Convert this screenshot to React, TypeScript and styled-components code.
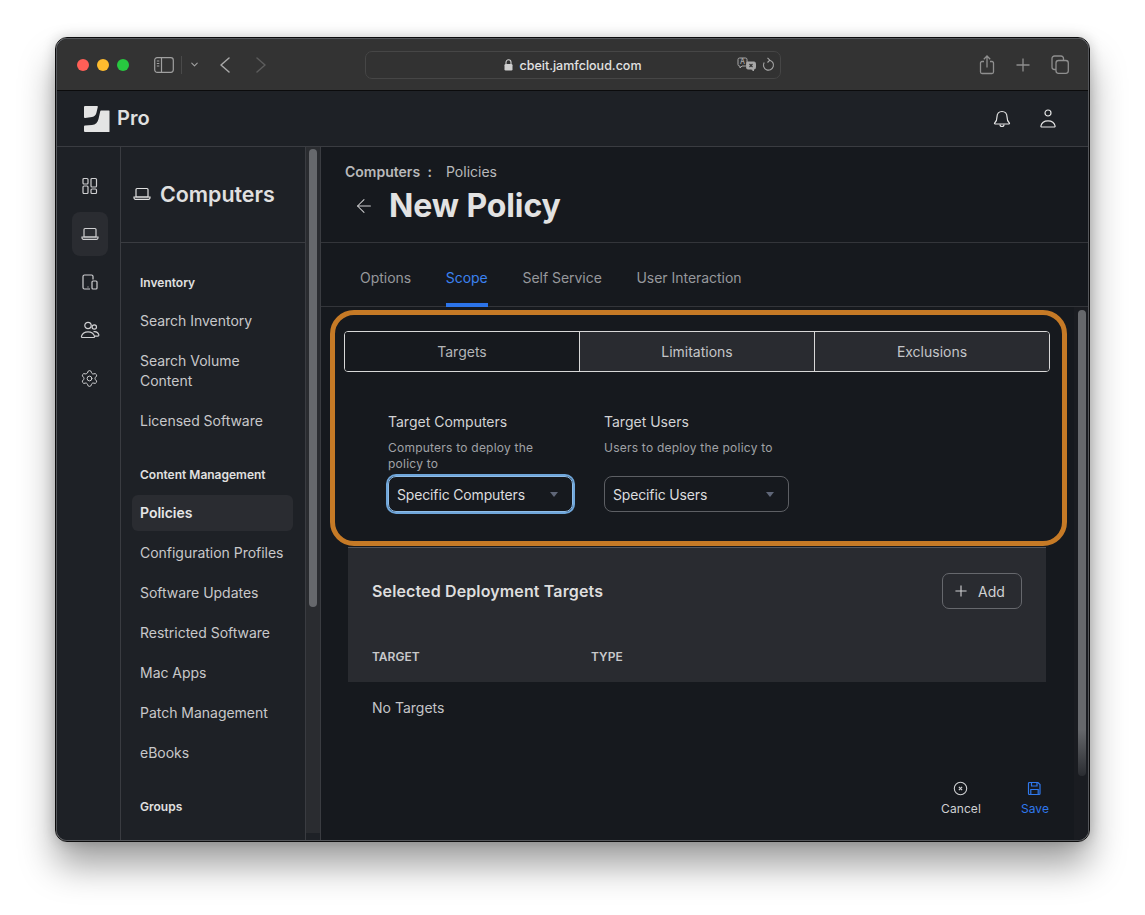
import React from 'react'
import styled, { createGlobalStyle } from 'styled-components'
import { ArrowLeft, ChevronDown, Settings } from 'lucide-react'

const GlobalStyle = createGlobalStyle`
  html, body {
    margin: 0;
    padding: 0;
    background: #fff;
  }
  body {
    font-family: Inter, "Liberation Sans", sans-serif;
    -webkit-font-smoothing: antialiased;
  }
  * {
    box-sizing: border-box;
  }
`

const Page = styled.div`
  width: 1145px;
  height: 915px;
  padding: 38px 0 0 56px;
  overflow: hidden;
`

const Window = styled.div`
  width: 1033px;
  height: 803px;
  display: flex;
  flex-direction: column;
  border-radius: 11px;
  overflow: hidden;
  border: 1px solid #55575b;
  outline: 1px solid #0c0c0d;
  background: #1e2126;
  box-shadow: 0 24px 36px rgba(0, 0, 0, 0.38), 0 0 14px rgba(0, 0, 0, 0.22);
`

const TitleBar = styled.div`
  height: 52px;
  flex: none;
  display: flex;
  align-items: center;
  background: #333333;
  border-bottom: 1px solid #0b0b0c;
  padding-left: 20px;
  color: #a0a0a0;
  position: relative;
`

const Light = styled.span<{ $color: string }>`
  width: 12px;
  height: 12px;
  border-radius: 50%;
  margin-right: 8px;
  background: ${(p) => p.$color};
`

const SidebarToggle = styled.div`
  margin-left: 17px;
  display: flex;
  align-items: center;
  gap: 7px;
`

const Divider = styled.span`
  width: 1px;
  height: 18px;
  background: #4a4a4a;
`

const NavArrows = styled.div`
  display: flex;
  align-items: center;
  margin-left: 20px;
  gap: 26px;
`

const AddressBar = styled.div`
  position: absolute;
  left: 308px;
  top: 12px;
  width: 416px;
  height: 28px;
  border-radius: 7px;
  border: 1px solid #464646;
  background: #323232;
  display: flex;
  align-items: center;
  justify-content: center;
  gap: 6px;
  font-size: 12.5px;
  font-weight: 500;
  color: #e2e2e2;
`

const AddressRight = styled.div`
  position: absolute;
  right: 5px;
  top: 5px;
  display: flex;
  align-items: center;
  gap: 6px;
  color: #a8a8a8;
`

const WindowActions = styled.div`
  margin-left: auto;
  margin-right: 19px;
  display: flex;
  align-items: center;
  gap: 21px;
  color: #8f8f8f;
`

const AppHeader = styled.header`
  height: 56px;
  flex: none;
  display: flex;
  align-items: center;
  padding: 0 30px 0 27px;
  background: #1e2126;
  border-bottom: 1px solid #3a3c41;
  color: #e4e4e4;
`

const Brand = styled.div`
  display: flex;
  align-items: center;
  gap: 7px;
  font-size: 20px;
  font-weight: 600;
  color: #e0e0e0;
`

const BrandName = styled.span`
  padding-bottom: 2px;
`

const HeaderActions = styled.div`
  margin-left: auto;
  display: flex;
  align-items: center;
  gap: 26px;
`

const Body = styled.div`
  flex: 1;
  min-height: 0;
  display: flex;
`

const Rail = styled.nav`
  width: 64px;
  flex: none;
  display: flex;
  flex-direction: column;
  align-items: center;
  padding: 17px 0 0 2px;
  gap: 4px;
  background: #1e2126;
  border-right: 1px solid #3a3c41;
  color: #cfcfd1;
`

const RailItem = styled.div<{ $active?: boolean }>`
  width: 36px;
  height: 44px;
  border-radius: 8px;
  display: flex;
  align-items: center;
  justify-content: center;
  background: ${(p) => (p.$active ? '#2a2c31' : 'transparent')};
`

const SubNav = styled.aside`
  width: 200px;
  flex: none;
  display: flex;
  background: #1e2126;
  border-right: 1px solid #3a3c41;
  overflow: hidden;
`

const SubNavColumn = styled.div`
  width: 185px;
  flex: none;
  border-right: 1px solid #3a3c41;
`

const SubNavHeader = styled.div`
  height: 96px;
  display: flex;
  align-items: center;
  gap: 9px;
  padding: 0 0 2px 12px;
  border-bottom: 1px solid #3a3c41;
  font-size: 21.4px;
  font-weight: 600;
  color: #e0e0e0;
`

const NavList = styled.div`
  padding: 30px 12px 0 11px;
`

const NavGroup = styled.div`
  font-size: 12px;
  font-weight: 600;
  line-height: 20px;
  color: #e0e0e0;
  padding-left: 8px;
  margin-bottom: 10px;
`

const NavItem = styled.div<{ $active?: boolean; $last?: boolean }>`
  padding: 8px;
  margin-bottom: ${(p) => (p.$last ? '26px' : '4px')};
  border-radius: 6px;
  font-size: 14px;
  line-height: 20px;
  letter-spacing: -0.02px;
  font-weight: ${(p) => (p.$active ? 600 : 400)};
  color: ${(p) => (p.$active ? '#e6e6e6' : '#c8c8ca')};
  background: ${(p) => (p.$active ? '#2a2c31' : 'transparent')};
`

const ScrollTrack = styled.div`
  flex: 1;
  padding: 2px 3px 0 3px;
  margin-bottom: 7px;
  background: #2a2c30;
`

const ScrollThumb = styled.div`
  height: 458px;
  border-radius: 5px;
  background: #66686c;
`

const Main = styled.main`
  flex: 1;
  min-width: 0;
  display: flex;
  flex-direction: column;
  background: #16191e;
  position: relative;
`

const PageHeader = styled.div`
  height: 96px;
  flex: none;
  padding: 16px 0 0 24px;
  border-bottom: 1px solid #33353a;
`

const Breadcrumb = styled.div`
  display: flex;
  font-size: 14px;
  line-height: 18px;
  color: #b9b9bb;
`

const Crumb = styled.span`
  width: 101px;
  font-weight: 600;
  word-spacing: 4px;
`

const TitleRow = styled.div`
  display: flex;
  align-items: center;
  margin-top: 4px;
  padding-left: 8px;
  gap: 14px;
  color: #cfcfd1;
`

const Title = styled.h1`
  margin: 0;
  font-size: 32px;
  line-height: 42px;
  font-weight: 700;
  letter-spacing: -0.1px;
  color: #e2e2e2;
`

const Tabs = styled.div`
  height: 64px;
  flex: none;
  display: flex;
  gap: 34.7px;
  padding-left: 39px;
  border-bottom: 1px solid #33353a;
`

const Tab = styled.div<{ $active?: boolean }>`
  display: flex;
  align-items: center;
  height: 64px;
  padding-top: 8px;
  font-size: 14px;
  letter-spacing: -0.03px;
  color: ${(p) => (p.$active ? '#3b82f0' : '#96989c')};
  border-bottom: 4px solid ${(p) => (p.$active ? '#2c74ea' : 'transparent')};
`

const Content = styled.div`
  flex: 1;
  min-height: 0;
  padding: 24px 38px 0 23px;
`

const Segments = styled.div`
  display: grid;
  grid-template-columns: 234px 235px 1fr;
  height: 41px;
  border: 1px solid #d8d8d8;
  border-radius: 4px;
  overflow: hidden;
`

const Segment = styled.div<{ $active?: boolean; $first?: boolean }>`
  display: flex;
  align-items: center;
  justify-content: center;
  font-size: 14px;
  color: ${(p) => (p.$active ? '#b4b5b8' : '#c4c5c8')};
  background: ${(p) => (p.$active ? '#16191e' : '#292b30')};
  border-left: ${(p) => (p.$first ? 'none' : '1px solid #d8d8d8')};
`

const Fields = styled.div`
  display: flex;
  gap: 31px;
  padding: 40px 0 0 44px;
`

const Field = styled.div`
  width: 185px;
`

const FieldLabel = styled.div`
  font-size: 14px;
  line-height: 20px;
  color: #d2d3d5;
`

const FieldHint = styled.div`
  margin-top: 8px;
  height: 32px;
  padding-right: 9px;
  font-size: 12px;
  line-height: 16px;
  color: #a0a2a6;
  letter-spacing: 0.23px;
`

const Select = styled.div<{ $focused?: boolean }>`
  margin-top: 4px;
  height: 36px;
  display: flex;
  align-items: center;
  justify-content: space-between;
  padding: 0 14px 0 8px;
  border-radius: 8px;
  font-size: 14px;
  letter-spacing: -0.15px;
  color: #dcdcde;
  border: 1px solid ${(p) => (p.$focused ? '#8ebce8' : '#5d5f64')};
  box-shadow: ${(p) => (p.$focused ? '0 0 0 2px #6fa6da' : 'none')};
`

const Caret = styled.span`
  width: 0;
  height: 0;
  border-left: 4px solid transparent;
  border-right: 4px solid transparent;
  border-top: 5px solid #5f6678;
`

const TargetsPanel = styled.section`
  margin: 35px 4px 0;
  height: 135px;
  padding: 25px 24px 0;
  background: #292b30;
  border-top: 1px solid #55575c;
`

const PanelHeader = styled.div`
  display: flex;
  align-items: center;
  justify-content: space-between;
  height: 36px;
`

const PanelTitle = styled.h2`
  margin: 0;
  font-size: 16px;
  font-weight: 600;
  letter-spacing: 0.13px;
  color: #dedede;
`

const AddButton = styled.div`
  width: 80px;
  height: 36px;
  display: flex;
  align-items: center;
  gap: 11px;
  padding-left: 12px;
  border: 1px solid #66686d;
  border-radius: 7px;
  font-size: 14px;
  color: #d0d1d3;
`

const TableHead = styled.div`
  display: grid;
  grid-template-columns: 219px 1fr;
  margin-top: 40px;
  font-size: 12px;
  line-height: 16px;
  font-weight: 600;
  color: #c8c9cb;
`

const EmptyRow = styled.div`
  padding: 16px 28px;
  font-size: 14px;
  line-height: 20px;
  color: #c4c5c8;
`

const Footer = styled.div`
  height: 62px;
  flex: none;
  display: flex;
  justify-content: flex-end;
  gap: 40px;
  padding: 3px 39px 0 0;
`

const FooterAction = styled.div<{ $primary?: boolean }>`
  display: flex;
  flex-direction: column;
  align-items: center;
  gap: 5px;
  font-size: 12px;
  line-height: 16px;
  letter-spacing: 0.08px;
  color: ${(p) => (p.$primary ? '#2f78ec' : '#cfd0d2')};
`

const Highlight = styled.div`
  position: absolute;
  left: 9px;
  top: 163px;
  width: 737px;
  height: 236px;
  border: 5px solid #c67a26;
  border-radius: 24px;
  pointer-events: none;
`

const MainScrollbar = styled.div`
  position: absolute;
  right: 0;
  top: 160px;
  bottom: 0;
  width: 14px;
  padding: 3px 2px 0 4px;
  background: #1a1c21;
`

const MainScrollThumb = styled.div`
  height: 466px;
  border-radius: 5px;
  background: linear-gradient(#66686c 90%, #2a2c31);
`

function JamfLogo() {
  return (
    <svg width="26" height="26" viewBox="0 0 26 26" fill="#e4e4e4">
      <path d="M1 0h12a.8.8 0 0 1 .8 1L12.500 6.500C12 9 10.500 10.500 8 11L1.200 12A1 1 0 0 1 0 11V1a1 1 0 0 1 1-1z" />
      <path d="M17.500 4.500H25a.5.5 0 0 1 .5.5v20.500a.5.5 0 0 1-.5.5H1a1 1 0 0 1-1-1V20.500a1 1 0 0 1 1-1l7-.5c3.500-.3 5.800-2.500 6.500-6l1.700-7.500c.1-.6.500-1 1.300-1z" />
    </svg>
  )
}

function DashboardIcon() {
  return (
    <svg width="18" height="18" viewBox="0 0 18 18" fill="none" stroke="currentColor" strokeWidth="1.2">
      <rect x="2" y="1.500" width="5" height="5.500" rx="1" />
      <rect x="2" y="9" width="5" height="7.500" rx="1" />
      <rect x="10" y="1.500" width="5.500" height="8.500" rx="1" />
      <rect x="10" y="12" width="5.500" height="4.500" rx="1" />
    </svg>
  )
}

function LaptopIcon({ size = 18 }: { size?: number }) {
  return (
    <svg width={size} height={size} viewBox="0 0 18 18" fill="none" stroke="currentColor" strokeWidth="1.200">
      <path d="M4 3.500h10a1 1 0 0 1 1 1V12H3V4.500a1 1 0 0 1 1-1z" />
      <path d="M1 12h16v.8a1.500 1.500 0 0 1-1.500 1.500h-13A1.500 1.500 0 0 1 1 12.800z" />
    </svg>
  )
}

function DevicesIcon() {
  return (
    <svg width="18" height="18" viewBox="0 0 18 18" fill="none" stroke="currentColor" strokeWidth="1.200">
      <path d="M9 16H3.500A1.500 1.500 0 0 1 2 14.500V3.500A1.500 1.500 0 0 1 3.500 2h7A1.500 1.500 0 0 1 12 3.500V6.500" />
      <rect x="11" y="8" width="5" height="8" rx="1" />
      <path d="M6.500 14h1" />
    </svg>
  )
}

function UsersIcon() {
  return (
    <svg width="20" height="18" viewBox="0 0 20 18" fill="none" stroke="currentColor" strokeWidth="1.200">
      <circle cx="8" cy="4.500" r="3.200" />
      <circle cx="14.300" cy="6" r="2.200" />
      <path d="M2.500 16.500h11c.8 0 1.200-.6 1-1.300C13.700 12.500 11.200 10.800 8 10.800s-5.700 1.700-6.500 4.400c-.2.700.2 1.300 1 1.300z" />
      <path d="M13.500 10.700c2.500-.5 4.600.7 5.300 3 .2.800-.2 1.500-1 1.500h-2.800" />
    </svg>
  )
}

function SidebarIcon() {
  return (
    <svg width="20" height="16" viewBox="0 0 20 16" fill="none" stroke="currentColor" strokeWidth="1.200">
      <rect x="0.700" y="0.700" width="18.600" height="14.600" rx="2.500" />
      <path d="M7.500 1v14" />
      <path d="M2.800 4h2.500M2.800 6.500h2.500M2.800 9h2.500" />
    </svg>
  )
}

function Chevron({ flip, color }: { flip?: boolean; color: string }) {
  return (
    <svg width="10" height="16" viewBox="0 0 10 16" fill="none" stroke={color} strokeWidth="1.500" strokeLinecap="round" strokeLinejoin="round">
      <path d={flip ? 'M1 1l8 7-8 7' : 'M9 1L1 8l8 7'} />
    </svg>
  )
}

function LockIcon() {
  return (
    <svg width="9" height="12" viewBox="0 0 9 12" fill="#cfcfcf">
      <path d="M2 5V3.300a2.500 2.500 0 0 1 5 0V5" fill="none" stroke="#cfcfcf" strokeWidth="1.100" />
      <rect x="0.500" y="5" width="8" height="6.500" rx="1.200" />
    </svg>
  )
}

function TranslateIcon() {
  return (
    <svg width="19" height="15" viewBox="0 0 19 15" fill="none" stroke="currentColor" strokeWidth="1">
      <path d="M2.500 1h6A1.500 1.500 0 0 1 10 2.500v5A1.500 1.500 0 0 1 8.500 9H5L3 11V9h-.5A1.500 1.500 0 0 1 1 7.500v-5A1.500 1.500 0 0 1 2.500 1z" />
      <text x="3" y="7.400" fontSize="7" fill="currentColor" stroke="none" fontFamily="Inter, sans-serif">
        A
      </text>
      <path d="M10 5h7A1.500 1.500 0 0 1 18.500 6.500v4A1.500 1.500 0 0 1 17 12H16.500v2l-2-2H11A1.500 1.500 0 0 1 9.500 10.500V9.500z" fill="currentColor" />
      <path d="M12.500 7l3 3M15.500 7l-3 3" stroke="#323232" strokeWidth="1.100" />
    </svg>
  )
}

function ReloadIcon() {
  return (
    <svg width="13" height="15" viewBox="0 0 13 15" fill="none" stroke="currentColor" strokeWidth="1.100">
      <path d="M7.500 3.200a5 5 0 1 1-5.300 2.300" />
      <path d="M5.500 0.800l2.300 2.400-2.300 2.300" />
    </svg>
  )
}

function ShareIcon() {
  return (
    <svg width="16" height="20" viewBox="0 0 16 20" fill="none" stroke="currentColor" strokeWidth="1.300">
      <path d="M5 6.500H3A1.500 1.500 0 0 0 1.500 8v9A1.500 1.500 0 0 0 3 18.500h10a1.500 1.500 0 0 0 1.500-1.500V8A1.500 1.500 0 0 0 13 6.500h-2" />
      <path d="M8 12.500V1M4.800 4.200L8 1l3.200 3.200" />
    </svg>
  )
}

function PlusIcon({ size = 14 }: { size?: number }) {
  return (
    <svg width={size} height={size} viewBox="0 0 14 14" fill="none" stroke="currentColor" strokeWidth="1.300">
      <path d="M7 0.500v13M0.500 7h13" />
    </svg>
  )
}

function TabsIcon() {
  return (
    <svg width="18" height="19" viewBox="0 0 18 19" fill="none" stroke="currentColor" strokeWidth="1.300">
      <rect x="5" y="5.500" width="12.300" height="12.800" rx="2.500" />
      <path d="M5 14.500H3.500A2.500 2.500 0 0 1 1 12V3.500A2.500 2.500 0 0 1 3.500 1H10a2.500 2.500 0 0 1 2.500 2.500V5.500" />
    </svg>
  )
}

function BellIcon() {
  return (
    <svg width="20" height="20" viewBox="0 0 20 20" fill="none" stroke="currentColor" strokeWidth="1.200">
      <path d="M10 2.500c-3 0-5 2.300-5 5.300 0 3.200-.8 4.800-2.300 6.200-.4.400-.2 1 .4 1h13.800c.6 0 .8-.6.4-1-1.500-1.400-2.300-3-2.300-6.200 0-3-2-5.300-5-5.300z" />
      <path d="M8 15.500a2 2 0 0 0 4 0" />
    </svg>
  )
}

function UserIcon() {
  return (
    <svg width="20" height="20" viewBox="0 0 20 20" fill="none" stroke="currentColor" strokeWidth="1.200">
      <circle cx="10" cy="4" r="3" />
      <path d="M3.700 18h12.600c.6 0 .9-.5.8-1-.6-3-3.500-5.200-7.100-5.200S3.500 14 2.900 17c-.1.500.2 1 .8 1z" />
    </svg>
  )
}

function CancelIcon() {
  return (
    <svg width="15" height="15" viewBox="0 0 15 15" fill="none" stroke="currentColor" strokeWidth="1.100">
      <circle cx="7.500" cy="7.500" r="6.200" />
      <path d="M5.900 5.900l3.200 3.200M9.100 5.900l-3.200 3.200" strokeWidth="1.200" />
    </svg>
  )
}

function SaveIcon() {
  return (
    <svg width="15" height="15" viewBox="0 0 15 15" fill="none" stroke="currentColor" strokeWidth="1.200">
      <path d="M2.500 1.500h8.500l2 2v9a1 1 0 0 1-1 1H2.500a1 1 0 0 1-1-1v-10a1 1 0 0 1 1-1z" />
      <path d="M4.500 1.500v3.500h5.500V1.500M3.800 13.500V8.500h7.400v5" />
    </svg>
  )
}

export default function App() {
  return (
    <Page>
      <GlobalStyle />
      <Window>
        <TitleBar>
          <Light $color="#ff5f57" />
          <Light $color="#febc2e" />
          <Light $color="#28c840" />
          <SidebarToggle>
            <SidebarIcon />
            <Divider />
            <ChevronDown size={11} strokeWidth={2.4} />
          </SidebarToggle>
          <NavArrows>
            <Chevron color="#a8a8a8" />
            <Chevron flip color="#5c5c5c" />
          </NavArrows>
          <AddressBar>
            <LockIcon />
            cbeit.jamfcloud.com
            <AddressRight>
              <TranslateIcon />
              <ReloadIcon />
            </AddressRight>
          </AddressBar>
          <WindowActions>
            <ShareIcon />
            <PlusIcon />
            <TabsIcon />
          </WindowActions>
        </TitleBar>
        <AppHeader>
          <Brand>
            <JamfLogo />
            <BrandName>Pro</BrandName>
          </Brand>
          <HeaderActions>
            <BellIcon />
            <UserIcon />
          </HeaderActions>
        </AppHeader>
        <Body>
          <Rail>
            <RailItem>
              <DashboardIcon />
            </RailItem>
            <RailItem $active>
              <LaptopIcon />
            </RailItem>
            <RailItem>
              <DevicesIcon />
            </RailItem>
            <RailItem>
              <UsersIcon />
            </RailItem>
            <RailItem>
              <Settings size={19} strokeWidth={1.25} />
            </RailItem>
          </Rail>
          <SubNav>
            <SubNavColumn>
              <SubNavHeader>
                <LaptopIcon />
                Computers
              </SubNavHeader>
              <NavList>
                <NavGroup>Inventory</NavGroup>
                <NavItem>Search Inventory</NavItem>
                <NavItem>Search Volume Content</NavItem>
                <NavItem $last>Licensed Software</NavItem>
                <NavGroup>Content Management</NavGroup>
                <NavItem $active>Policies</NavItem>
                <NavItem>Configuration Profiles</NavItem>
                <NavItem>Software Updates</NavItem>
                <NavItem>Restricted Software</NavItem>
                <NavItem>Mac Apps</NavItem>
                <NavItem>Patch Management</NavItem>
                <NavItem $last>eBooks</NavItem>
                <NavGroup>Groups</NavGroup>
              </NavList>
            </SubNavColumn>
            <ScrollTrack>
              <ScrollThumb />
            </ScrollTrack>
          </SubNav>
          <Main>
            <PageHeader>
              <Breadcrumb>
                <Crumb>Computers :</Crumb>
                Policies
              </Breadcrumb>
              <TitleRow>
                <ArrowLeft size={22} strokeWidth={1.1} />
                <Title>New Policy</Title>
              </TitleRow>
            </PageHeader>
            <Tabs>
              <Tab>Options</Tab>
              <Tab $active>Scope</Tab>
              <Tab>Self Service</Tab>
              <Tab>User Interaction</Tab>
            </Tabs>
            <Content>
              <Segments>
                <Segment $active $first>
                  Targets
                </Segment>
                <Segment>Limitations</Segment>
                <Segment>Exclusions</Segment>
              </Segments>
              <Fields>
                <Field>
                  <FieldLabel>Target Computers</FieldLabel>
                  <FieldHint>Computers to deploy the policy to</FieldHint>
                  <Select $focused>
                    Specific Computers
                    <Caret />
                  </Select>
                </Field>
                <Field>
                  <FieldLabel>Target Users</FieldLabel>
                  <FieldHint>Users to deploy the policy to</FieldHint>
                  <Select>
                    Specific Users
                    <Caret />
                  </Select>
                </Field>
              </Fields>
              <TargetsPanel>
                <PanelHeader>
                  <PanelTitle>Selected Deployment Targets</PanelTitle>
                  <AddButton>
                    <PlusIcon size={12} />
                    Add
                  </AddButton>
                </PanelHeader>
                <TableHead>
                  <span>TARGET</span>
                  <span>TYPE</span>
                </TableHead>
              </TargetsPanel>
              <EmptyRow>No Targets</EmptyRow>
            </Content>
            <Footer>
              <FooterAction>
                <CancelIcon />
                Cancel
              </FooterAction>
              <FooterAction $primary>
                <SaveIcon />
                Save
              </FooterAction>
            </Footer>
            <MainScrollbar>
              <MainScrollThumb />
            </MainScrollbar>
            <Highlight />
          </Main>
        </Body>
      </Window>
    </Page>
  )
}
